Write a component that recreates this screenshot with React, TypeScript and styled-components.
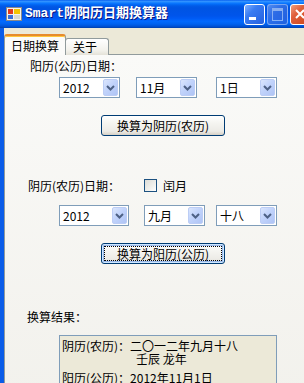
import React from 'react';
import styled, { createGlobalStyle } from 'styled-components';

const GlobalStyle = createGlobalStyle`
  html, body {
    margin: 0;
    padding: 0;
    overflow: hidden;
    background: #ece9d8;
  }
  body {
    font-family: "Noto Sans CJK SC", "Liberation Sans", sans-serif;
    font-size: 12px;
    color: #000;
  }
`;

const Window = styled.div`
  width: 318px;
  height: 383px;
  display: flex;
  flex-direction: column;
  overflow: hidden;
`;

const TitleBar = styled.div`
  flex: none;
  height: 28px;
  display: flex;
  align-items: center;
  padding: 0 7px 0 6px;
  background: linear-gradient(
    to bottom,
    #0058ee 0%,
    #3593ff 4%,
    #288eff 7%,
    #127dff 10%,
    #036ffc 14%,
    #0262ee 18%,
    #0057e5 24%,
    #0054e3 30%,
    #0055eb 56%,
    #005bf5 66%,
    #026afe 76%,
    #0062ef 86%,
    #0052d6 94%,
    #0040ab 100%
  );
`;

const Title = styled.span`
  flex: 1;
  margin-left: 3px;
  color: #fff;
  font: bold 13px "Liberation Mono", "Noto Sans CJK SC", monospace;
  line-height: 16px;
  text-shadow: 1px 1px 0 #0a1883;
  white-space: nowrap;
`;

const CaptionButtons = styled.div`
  display: flex;
  gap: 2px;
  margin-top: 1px;
`;

const CaptionButton = styled.div<{ $kind: 'min' | 'max' | 'close' }>`
  position: relative;
  width: 21px;
  height: 21px;
  box-sizing: border-box;
  border-radius: 3px;
  border: 1px solid ${({ $kind }) => ($kind === 'max' ? 'rgba(255,255,255,0.55)' : '#fff')};
  background: ${({ $kind }) =>
    $kind === 'close'
      ? 'linear-gradient(135deg, #f0a080 0%, #e0603c 35%, #cc4418 100%)'
      : $kind === 'max'
      ? 'linear-gradient(135deg, #6a9cf4 0%, #3c74e6 40%, #2a60d8 100%)'
      : 'linear-gradient(135deg, #7fb0ff 0%, #3a7cf2 35%, #2560df 100%)'};
  opacity: ${({ $kind }) => ($kind === 'max' ? 0.75 : 1)};
`;

const MinBar = styled.span`
  position: absolute;
  left: 4px;
  top: 12px;
  width: 7px;
  height: 3px;
  background: #fff;
`;

const MaxBox = styled.span`
  position: absolute;
  left: 4px;
  top: 3px;
  width: 9px;
  height: 9px;
  border: 1px solid #b5ccf5;
  border-top-width: 3px;
`;

const Frame = styled.div`
  flex: 1;
  display: flex;
  border-left: 4px solid #0a5ce8;
  box-shadow: inset 1px 0 0 #0831d9;
`;

const Client = styled.div`
  flex: 1;
  display: flex;
  flex-direction: column;
  padding-top: 6px;
  background: #ece9d8;
`;

const TabStrip = styled.div`
  display: flex;
  align-items: flex-end;
  height: 21px;
  margin-bottom: -1px;
  position: relative;
  z-index: 1;
`;

const Tab = styled.div<{ $active?: boolean }>`
  box-sizing: border-box;
  display: flex;
  align-items: center;
  justify-content: center;
  border: 1px solid #919b9c;
  border-radius: 3px 3px 0 0;
  line-height: 14px;
  ${({ $active }) =>
    $active
      ? `
    width: 62px;
    height: 21px;
    border-bottom: none;
    border-top: 2px solid #e68b2c;
    box-shadow: inset 0 1px 0 #ffc73c;
    background: #fbfbf9;
    padding-top: 1px;
  `
      : `
    width: 44px;
    height: 17px;
    margin-left: -1px;
    border-bottom: none;
    background: linear-gradient(to bottom, #ffffff, #f3f2ec 70%, #e4e2d8);
    padding-right: 4px;
  `}
`;

const Panel = styled.div`
  flex: 1;
  display: flex;
  flex-direction: column;
  border: 1px solid #919b9c;
  background: linear-gradient(to bottom, #fafaf8, #f2f1ec);
`;

const Label = styled.div<{ $indent: number; $top: number }>`
  margin-top: ${({ $top }) => $top}px;
  padding-left: ${({ $indent }) => $indent}px;
  line-height: 14px;
  white-space: nowrap;
`;

const ComboRow = styled.div<{ $top: number }>`
  display: flex;
  margin-top: ${({ $top }) => $top}px;
  padding-left: 54px;
`;

const Combo = styled.div<{ $w: number; $gap: number }>`
  box-sizing: border-box;
  display: flex;
  align-items: center;
  width: ${({ $w }) => $w}px;
  height: 21px;
  margin-left: ${({ $gap }) => $gap}px;
  padding: 1px;
  border: 1px solid #7f9db9;
  background: #fff;
`;

const ComboValue = styled.span`
  flex: 1;
  padding-left: 2px;
  line-height: 17px;
  white-space: nowrap;
`;

const DropButton = styled.span`
  flex: none;
  display: flex;
  align-items: center;
  justify-content: center;
  width: 15px;
  height: 17px;
  box-sizing: border-box;
  border: 1px solid #bccdf5;
  border-radius: 2px;
  background: linear-gradient(135deg, #dbe6fd 0%, #c1d3fb 45%, #afc4f5 100%);
`;

const PushButton = styled.div<{ $top: number; $focused?: boolean }>`
  position: relative;
  box-sizing: border-box;
  display: flex;
  align-items: center;
  justify-content: center;
  width: 124px;
  height: 21px;
  margin-top: ${({ $top }) => $top}px;
  margin-left: 96px;
  border: 1px solid #003c74;
  border-radius: 3px;
  background: linear-gradient(to bottom, #ffffff 0%, #f5f5f1 35%, #ecebe6 80%, #d6d0c5 100%);
  line-height: 14px;
  ${({ $focused }) =>
    $focused
      ? `
    box-shadow: inset 0 0 0 1px #cee7ff, inset 0 0 0 2px #98b8ea;
    &::after {
      content: '';
      position: absolute;
      inset: 2px;
      border: 1px dotted #000;
    }
  `
      : ''}
`;

const LeapRow = styled.div`
  display: flex;
  align-items: center;
  height: 13px;
  margin-top: 43px;
  padding-left: 23px;
  line-height: 13px;
`;

const LeapLabel = styled.span`
  width: 116px;
  white-space: nowrap;
`;

const CheckBox = styled.span`
  width: 13px;
  height: 13px;
  box-sizing: border-box;
  border: 1px solid #1c5180;
  background: linear-gradient(135deg, #dcdcd7 0%, #f0f0ec 60%, #ffffff 100%);
  margin-right: 6px;
`;

const ResultBox = styled.div`
  box-sizing: border-box;
  width: 218px;
  height: 70px;
  margin-top: 11px;
  margin-left: 54px;
  padding: 3px 2px 0;
  border: 1px solid #7f9db9;
  background: #ece9d8;
`;

const ResultLine = styled.div<{ $indent?: number; $top?: number }>`
  line-height: 13px;
  padding-left: ${({ $indent }) => $indent ?? 0}px;
  margin-top: ${({ $top }) => $top ?? 0}px;
  white-space: nowrap;
`;

const AppIcon = () => (
  <svg width="16" height="16" viewBox="0 0 16 16">
    <rect x="0.5" y="1.5" width="15" height="13" fill="#f4f2ea" stroke="#8a8a8a" />
    <rect x="2" y="3" width="5" height="5" fill="#e23a1c" />
    <rect x="8" y="3" width="6" height="5" fill="#f5c400" />
    <rect x="2" y="9" width="5" height="4" fill="#3a6fd8" />
    <rect x="8" y="9" width="6" height="4" fill="#d8d8d0" />
  </svg>
);

const Chevron = () => (
  <svg width="9" height="6" viewBox="0 0 9 6">
    <polyline points="1,1 4.5,4.5 8,1" fill="none" stroke="#4d6185" strokeWidth="2" />
  </svg>
);

const CloseX = () => (
  <svg width="19" height="19" viewBox="0 0 19 19" style={{ position: 'absolute', left: 0, top: 0 }}>
    <path d="M5 5 L13 13 M13 5 L5 13" stroke="#fff" strokeWidth="2" />
  </svg>
);

const ComboBox = ({ value, w = 61, gap = 0 }: { value: string; w?: number; gap?: number }) => (
  <Combo $w={w} $gap={gap}>
    <ComboValue>{value}</ComboValue>
    <DropButton>
      <Chevron />
    </DropButton>
  </Combo>
);

export default function App() {
  return (
    <>
      <GlobalStyle />
      <Window>
        <TitleBar>
          <AppIcon />
          <Title>Smart阴阳历日期换算器</Title>
          <CaptionButtons>
            <CaptionButton $kind="min">
              <MinBar />
            </CaptionButton>
            <CaptionButton $kind="max">
              <MaxBox />
            </CaptionButton>
            <CaptionButton $kind="close">
              <CloseX />
            </CaptionButton>
          </CaptionButtons>
        </TitleBar>
        <Frame>
          <Client>
            <TabStrip>
              <Tab $active>日期换算</Tab>
              <Tab>关于</Tab>
            </TabStrip>
            <Panel>
              <Label $indent={25} $top={4}>阳历(公历)日期：</Label>
              <ComboRow $top={4}>
                <ComboBox value="2012" />
                <ComboBox value="11月" gap={16} />
                <ComboBox value="1日" gap={19} />
              </ComboRow>
              <PushButton $top={17}>换算为阴历(农历)</PushButton>

              <LeapRow>
                <LeapLabel>阴历(农历)日期：</LeapLabel>
                <CheckBox />
                <span>闰月</span>
              </LeapRow>
              <ComboRow $top={13}>
                <ComboBox value="2012" w={70} />
                <ComboBox value="九月" gap={15} />
                <ComboBox value="十八" gap={11} />
              </ComboRow>
              <PushButton $top={17} $focused>
                换算为阳历(公历)
              </PushButton>

              <Label $indent={22} $top={46}>换算结果：</Label>
              <ResultBox>
                <ResultLine>阴历(农历)：二〇一二年九月十八</ResultLine>
                <ResultLine $indent={74}>壬辰 龙年</ResultLine>
                <ResultLine $top={6}>阳历(公历)：2012年11月1日</ResultLine>
              </ResultBox>
            </Panel>
          </Client>
        </Frame>
      </Window>
    </>
  );
}
